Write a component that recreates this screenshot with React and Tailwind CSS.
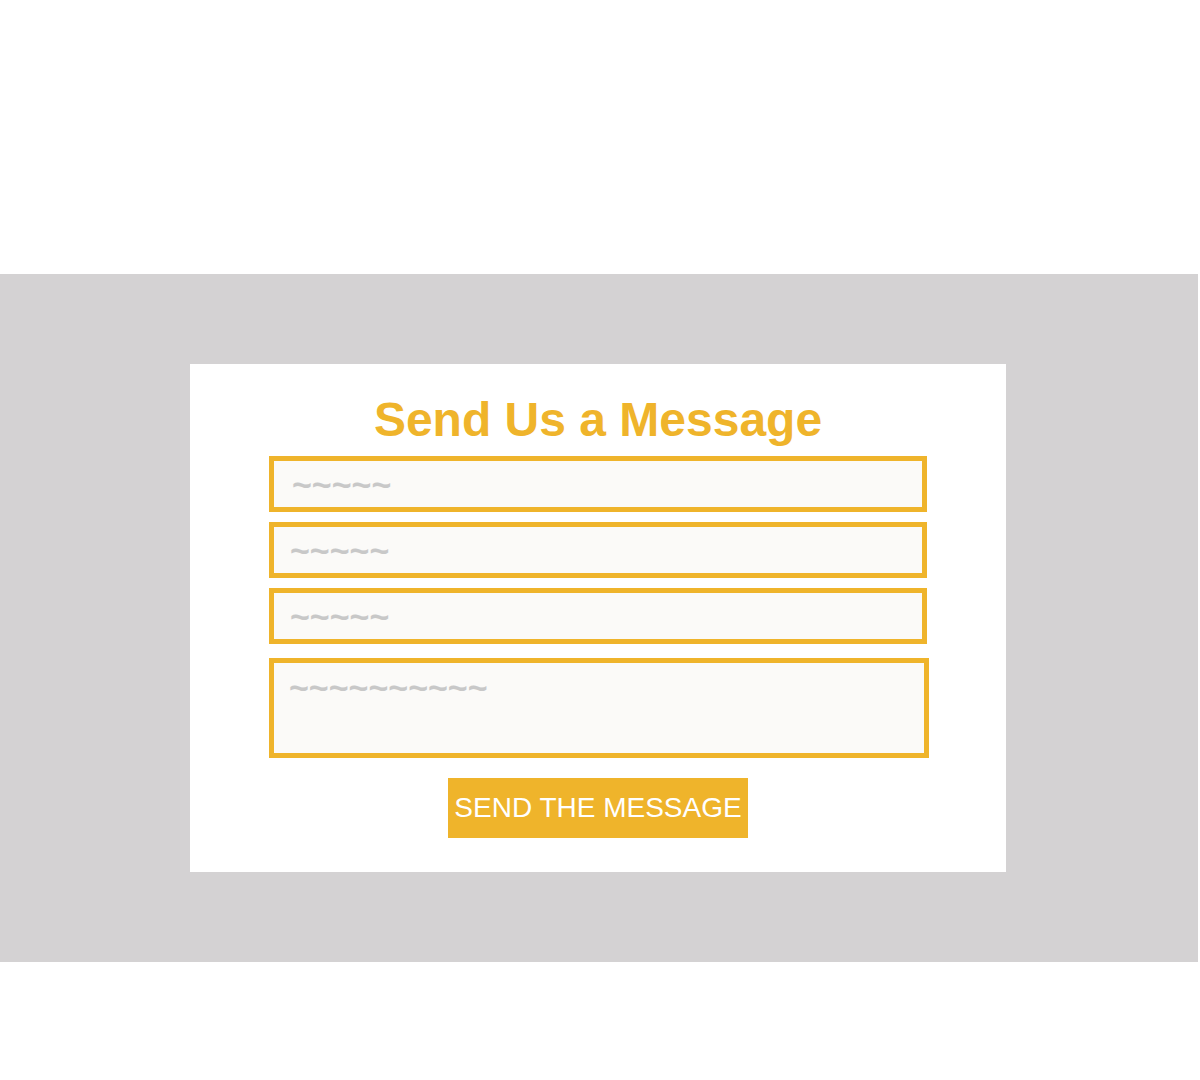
import React from "react";

export default function App() {
  const fields = ["~~~~~", "~~~~~", "~~~~~"];

  return (
    <div className="min-h-screen bg-white font-['Liberation_Sans',Arial,sans-serif]">
      <div className="h-[274px]" />
      <section className="w-[1198px] bg-[#d4d2d3] pt-[90px] pb-[90px] pr-[2px]">
        <div className="mx-auto w-[816px] bg-white pt-[32px] pb-[34px] flex flex-col items-center">
          <h2 className="text-[48px] leading-[48px] font-bold text-[#efb42b]">Send Us a Message</h2>

          <form className="mt-[12px] w-[658px] flex flex-col items-start" onSubmit={(e) => e.preventDefault()}>
            {fields.map((ph, i) => (
              <input
                key={i}
                type="text"
                placeholder={ph}
                className={`${i > 0 ? "mt-[10px]" : ""} w-[658px] h-[56px] border-[5px] border-[#efb42b] bg-[#fbfaf8] ${i === 0 ? "pl-[18px]" : "pl-[16px]"} text-[34px] outline-none placeholder:font-bold placeholder:text-[#c8c8c8]`}
              />
            ))}
            <textarea
              placeholder="~~~~~~~~~~"
              className="mt-[14px] w-[660px] h-[100px] border-[5px] border-[#efb42b] bg-[#fbfaf8] pl-[15px] pt-[7px] text-[34px] leading-[34px] outline-none resize-none placeholder:font-bold placeholder:text-[#c8c8c8]"
            />
            <div className="mt-[20px] w-full flex justify-center">
              <button
                type="submit"
                className="w-[300px] h-[60px] bg-[#efb42b] text-white text-[28px] leading-none uppercase flex items-center justify-center"
              >
                SEND THE MESSAGE
              </button>
            </div>
          </form>
        </div>
      </section>
    </div>
  );
}
